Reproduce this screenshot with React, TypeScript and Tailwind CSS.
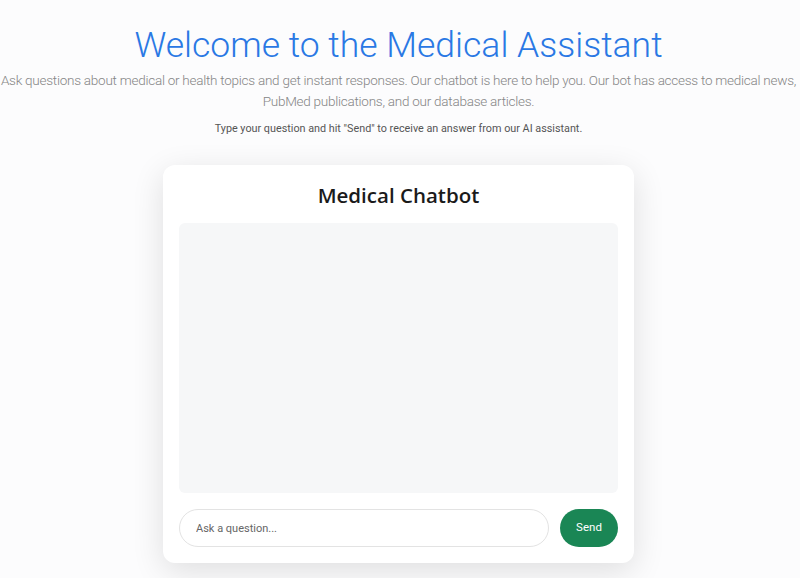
export default function App() {
  return (
    <div className="min-h-[578px] bg-[#fcfcfd] pr-[3px] text-center font-['Open_Sans','Noto_Sans',sans-serif]">
      <header className="pt-[21px] font-['Roboto','Open_Sans',sans-serif]">
        <h1 className="text-[35.5px] leading-[48px] font-light text-[#2a78e4]">
          Welcome to the Medical Assistant
        </h1>
        <p className="mt-[1px] text-[13.5px] leading-[21px] font-light tracking-[-0.25px] text-[#858585]">
          <span className="block whitespace-nowrap">
            Ask questions about medical or health topics and get instant responses. Our chatbot is here to help you. Our bot has access to medical news,
          </span>
          <span className="block">PubMed publications, and our database articles.</span>
        </p>
        <p className="mt-[9px] text-[10.8px] leading-[16px] text-[#555]">
          Type your question and hit "Send" to receive an answer from our AI assistant.
        </p>
      </header>

      <main className="mt-[28px] flex justify-center">
        <div className="w-[471px] rounded-xl bg-white p-4 shadow-[0_8px_32px_rgba(0,0,0,0.12)]">
          <h2 className="text-[20.5px] leading-[28px] font-semibold text-[#1a1a1a]">Medical Chatbot</h2>
          <div className="mt-[14px] h-[270px] rounded-md bg-[#f6f7f8]" />
          <div className="mt-4 flex items-center gap-[11px] font-['Roboto','Open_Sans',sans-serif]">
            <input
              type="text"
              placeholder="Ask a question..."
              className="h-[38px] flex-1 rounded-full border border-[#e3e3e3] bg-white px-4 text-[11px] text-[#333] outline-none placeholder:text-[#666]"
            />
            <button className="h-[38px] w-[58px] rounded-[19px] bg-[#1a8655] text-[11.5px] text-white">
              Send
            </button>
          </div>
        </div>
      </main>
    </div>
  );
}
